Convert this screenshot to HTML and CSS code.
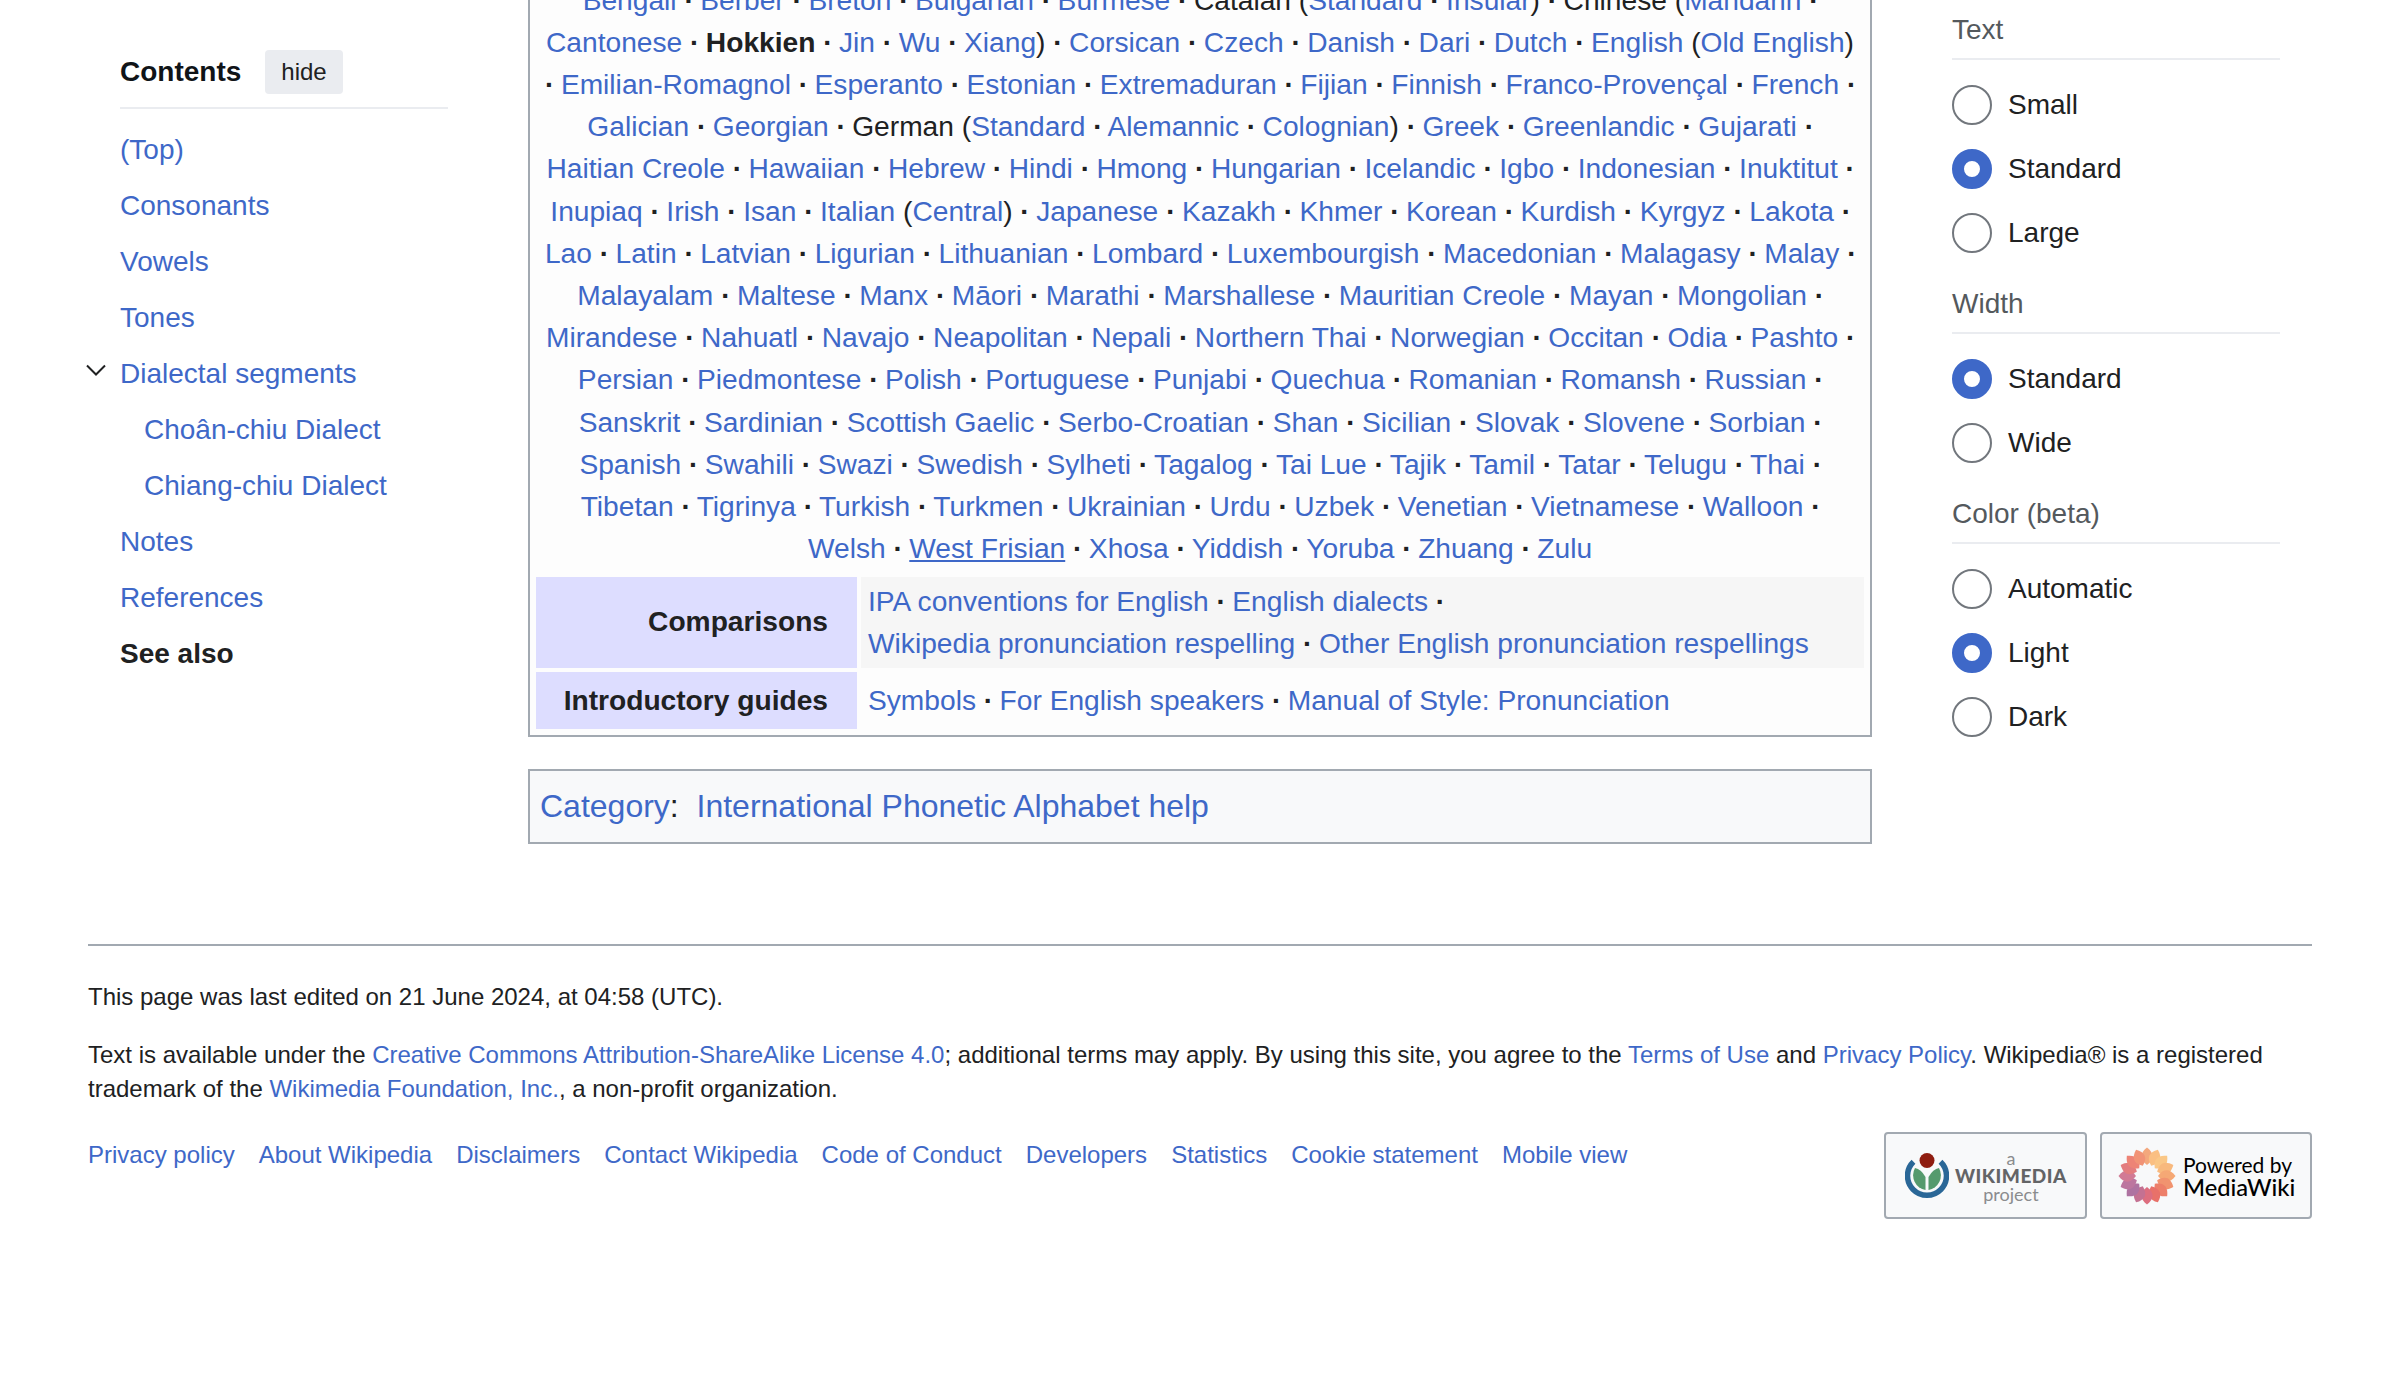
FILE: index.html
```html
<!DOCTYPE html>
<html lang="en">
<head>
<meta charset="utf-8">
<title>Help:IPA/Hokkien</title>
<link rel="stylesheet" href="styles.css">
</head>
<body>
<div class="shell">
	<div class="columns">
		<nav class="toc">
			<div class="toc-head">
				<span class="toc-title">Contents</span>
				<span class="toc-hide">hide</span>
			</div>
			<ul class="toc-list">
				<li><a href="#">(Top)</a></li>
				<li><a href="#">Consonants</a></li>
				<li><a href="#">Vowels</a></li>
				<li><a href="#">Tones</a></li>
				<li class="toc-parent">
					<svg class="toc-chevron" width="20" height="12" viewBox="0 0 20 12"><path d="M1 1.5 L10 10.5 L19 1.5" fill="none" stroke="#202122" stroke-width="2"/></svg>
					<a href="#">Dialectal segments</a>
				</li>
				<li class="toc-sub"><a href="#">Choân-chiu Dialect</a></li>
				<li class="toc-sub"><a href="#">Chiang-chiu Dialect</a></li>
				<li><a href="#">Notes</a></li>
				<li><a href="#">References</a></li>
				<li class="toc-current">See also</li>
			</ul>
		</nav>

		<main class="content">
			<div class="navbox">
				<div class="nav-langs">
					<a href="#">Bengali</a> <b>·</b> <a href="#">Berber</a> <b>·</b> <a href="#">Breton</a> <b>·</b> <a href="#">Bulgarian</a> <b>·</b> <a href="#">Burmese</a> <b>·</b> Catalan (<a href="#">Standard</a> <b>·</b> <a href="#">Insular</a>) <b>·</b> Chinese (<a href="#">Mandarin</a> <b>·</b><br>
					<a href="#">Cantonese</a> <b>·</b> <strong>Hokkien</strong> <b>·</b> <a href="#">Jin</a> <b>·</b> <a href="#">Wu</a> <b>·</b> <a href="#">Xiang</a>) <b>·</b> <a href="#">Corsican</a> <b>·</b> <a href="#">Czech</a> <b>·</b> <a href="#">Danish</a> <b>·</b> <a href="#">Dari</a> <b>·</b> <a href="#">Dutch</a> <b>·</b> <a href="#">English</a> (<a href="#">Old English</a>)<br>
					<b>·</b> <a href="#">Emilian-Romagnol</a> <b>·</b> <a href="#">Esperanto</a> <b>·</b> <a href="#">Estonian</a> <b>·</b> <a href="#">Extremaduran</a> <b>·</b> <a href="#">Fijian</a> <b>·</b> <a href="#">Finnish</a> <b>·</b> <a href="#">Franco-Provençal</a> <b>·</b> <a href="#">French</a> <b>·</b><br>
					<a href="#">Galician</a> <b>·</b> <a href="#">Georgian</a> <b>·</b> German (<a href="#">Standard</a> <b>·</b> <a href="#">Alemannic</a> <b>·</b> <a href="#">Colognian</a>) <b>·</b> <a href="#">Greek</a> <b>·</b> <a href="#">Greenlandic</a> <b>·</b> <a href="#">Gujarati</a> <b>·</b><br>
					<a href="#">Haitian Creole</a> <b>·</b> <a href="#">Hawaiian</a> <b>·</b> <a href="#">Hebrew</a> <b>·</b> <a href="#">Hindi</a> <b>·</b> <a href="#">Hmong</a> <b>·</b> <a href="#">Hungarian</a> <b>·</b> <a href="#">Icelandic</a> <b>·</b> <a href="#">Igbo</a> <b>·</b> <a href="#">Indonesian</a> <b>·</b> <a href="#">Inuktitut</a> <b>·</b><br>
					<a href="#">Inupiaq</a> <b>·</b> <a href="#">Irish</a> <b>·</b> <a href="#">Isan</a> <b>·</b> <a href="#">Italian</a> (<a href="#">Central</a>) <b>·</b> <a href="#">Japanese</a> <b>·</b> <a href="#">Kazakh</a> <b>·</b> <a href="#">Khmer</a> <b>·</b> <a href="#">Korean</a> <b>·</b> <a href="#">Kurdish</a> <b>·</b> <a href="#">Kyrgyz</a> <b>·</b> <a href="#">Lakota</a> <b>·</b><br>
					<a href="#">Lao</a> <b>·</b> <a href="#">Latin</a> <b>·</b> <a href="#">Latvian</a> <b>·</b> <a href="#">Ligurian</a> <b>·</b> <a href="#">Lithuanian</a> <b>·</b> <a href="#">Lombard</a> <b>·</b> <a href="#">Luxembourgish</a> <b>·</b> <a href="#">Macedonian</a> <b>·</b> <a href="#">Malagasy</a> <b>·</b> <a href="#">Malay</a> <b>·</b><br>
					<a href="#">Malayalam</a> <b>·</b> <a href="#">Maltese</a> <b>·</b> <a href="#">Manx</a> <b>·</b> <a href="#">Māori</a> <b>·</b> <a href="#">Marathi</a> <b>·</b> <a href="#">Marshallese</a> <b>·</b> <a href="#">Mauritian Creole</a> <b>·</b> <a href="#">Mayan</a> <b>·</b> <a href="#">Mongolian</a> <b>·</b><br>
					<a href="#">Mirandese</a> <b>·</b> <a href="#">Nahuatl</a> <b>·</b> <a href="#">Navajo</a> <b>·</b> <a href="#">Neapolitan</a> <b>·</b> <a href="#">Nepali</a> <b>·</b> <a href="#">Northern Thai</a> <b>·</b> <a href="#">Norwegian</a> <b>·</b> <a href="#">Occitan</a> <b>·</b> <a href="#">Odia</a> <b>·</b> <a href="#">Pashto</a> <b>·</b><br>
					<a href="#">Persian</a> <b>·</b> <a href="#">Piedmontese</a> <b>·</b> <a href="#">Polish</a> <b>·</b> <a href="#">Portuguese</a> <b>·</b> <a href="#">Punjabi</a> <b>·</b> <a href="#">Quechua</a> <b>·</b> <a href="#">Romanian</a> <b>·</b> <a href="#">Romansh</a> <b>·</b> <a href="#">Russian</a> <b>·</b><br>
					<a href="#">Sanskrit</a> <b>·</b> <a href="#">Sardinian</a> <b>·</b> <a href="#">Scottish Gaelic</a> <b>·</b> <a href="#">Serbo-Croatian</a> <b>·</b> <a href="#">Shan</a> <b>·</b> <a href="#">Sicilian</a> <b>·</b> <a href="#">Slovak</a> <b>·</b> <a href="#">Slovene</a> <b>·</b> <a href="#">Sorbian</a> <b>·</b><br>
					<a href="#">Spanish</a> <b>·</b> <a href="#">Swahili</a> <b>·</b> <a href="#">Swazi</a> <b>·</b> <a href="#">Swedish</a> <b>·</b> <a href="#">Sylheti</a> <b>·</b> <a href="#">Tagalog</a> <b>·</b> <a href="#">Tai Lue</a> <b>·</b> <a href="#">Tajik</a> <b>·</b> <a href="#">Tamil</a> <b>·</b> <a href="#">Tatar</a> <b>·</b> <a href="#">Telugu</a> <b>·</b> <a href="#">Thai</a> <b>·</b><br>
					<a href="#">Tibetan</a> <b>·</b> <a href="#">Tigrinya</a> <b>·</b> <a href="#">Turkish</a> <b>·</b> <a href="#">Turkmen</a> <b>·</b> <a href="#">Ukrainian</a> <b>·</b> <a href="#">Urdu</a> <b>·</b> <a href="#">Uzbek</a> <b>·</b> <a href="#">Venetian</a> <b>·</b> <a href="#">Vietnamese</a> <b>·</b> <a href="#">Walloon</a> <b>·</b><br>
					<a href="#">Welsh</a> <b>·</b> <a href="#" class="hover">West Frisian</a> <b>·</b> <a href="#">Xhosa</a> <b>·</b> <a href="#">Yiddish</a> <b>·</b> <a href="#">Yoruba</a> <b>·</b> <a href="#">Zhuang</a> <b>·</b> <a href="#">Zulu</a>
				</div>
				<div class="nav-groups">
					<div class="nav-group">Comparisons</div>
					<div class="nav-list even">
						<a href="#">IPA conventions for English</a> <b>·</b> <a href="#">English dialects</a> <b>·</b><br>
						<a href="#">Wikipedia pronunciation respelling</a> <b>·</b> <a href="#">Other English pronunciation respellings</a>
					</div>
					<div class="nav-group">Introductory guides</div>
					<div class="nav-list">
						<a href="#">Symbols</a> <b>·</b> <a href="#">For English speakers</a> <b>·</b> <a href="#">Manual of Style: Pronunciation</a>
					</div>
				</div>
			</div>
			<div class="catlinks"><a href="#">Category</a>:&nbsp; <a href="#">International Phonetic Alphabet help</a></div>
		</main>

		<aside class="appearance">
			<section class="app-group">
				<h3>Text</h3>
				<label class="radio"><span class="dot"></span>Small</label>
				<label class="radio"><span class="dot on"></span>Standard</label>
				<label class="radio"><span class="dot"></span>Large</label>
			</section>
			<section class="app-group">
				<h3>Width</h3>
				<label class="radio"><span class="dot on"></span>Standard</label>
				<label class="radio"><span class="dot"></span>Wide</label>
			</section>
			<section class="app-group">
				<h3>Color (beta)</h3>
				<label class="radio"><span class="dot"></span>Automatic</label>
				<label class="radio"><span class="dot on"></span>Light</label>
				<label class="radio"><span class="dot"></span>Dark</label>
			</section>
		</aside>
	</div>

	<footer class="footer">
		<p class="foot-line">This page was last edited on 21 June 2024, at 04:58 (UTC).</p>
		<p class="foot-line">Text is available under the <a href="#">Creative Commons Attribution-ShareAlike License 4.0</a>; additional terms may apply. By using this site, you agree to the <a href="#">Terms of Use</a> and <a href="#">Privacy Policy</a>. Wikipedia® is a registered trademark of the <a href="#">Wikimedia Foundation, Inc.</a>, a non-profit organization.</p>
		<div class="foot-bottom">
			<ul class="foot-links">
				<li><a href="#">Privacy policy</a></li>
				<li><a href="#">About Wikipedia</a></li>
				<li><a href="#">Disclaimers</a></li>
				<li><a href="#">Contact Wikipedia</a></li>
				<li><a href="#">Code of Conduct</a></li>
				<li><a href="#">Developers</a></li>
				<li><a href="#">Statistics</a></li>
				<li><a href="#">Cookie statement</a></li>
				<li><a href="#">Mobile view</a></li>
			</ul>
			<div class="badges">
				<a class="badge badge-wm" href="#">
					<svg width="44" height="46" viewBox="0 0 44 46">
						<path d="M8.5 8.7 A19.5 19.5 0 1 0 35.5 8.7" fill="none" stroke="#2a6797" stroke-width="5.5"/>
						<path d="M20.5 37 A15 15 0 0 1 10 15 Q16 16 20.5 24 Z" fill="#559a6d"/>
						<path d="M23.5 37 A15 15 0 0 0 34 15 Q28 16 23.5 24 Z" fill="#559a6d"/>
						<circle cx="22" cy="7.5" r="7.5" fill="#8f1d10"/>
					</svg>
					<span class="wm-text">
						<span class="wm-a">a</span>
						<span class="wm-name">WIKIMEDIA</span>
						<span class="wm-project">project</span>
					</span>
				</a>
				<a class="badge badge-mw" href="#">
					<svg width="58" height="58" viewBox="-29 -29 58 58">
						<defs><path id="petal" d="M0 -28.5 C7 -23 8 -17 0 -11 C-8 -17 -7 -23 0 -28.5 Z"/></defs>
						<g opacity="0.85">
							<use href="#petal" fill="#f39a68"/>
							<use href="#petal" transform="rotate(22.5)" fill="#fbb56e"/>
							<use href="#petal" transform="rotate(45)" fill="#fbbf72"/>
							<use href="#petal" transform="rotate(67.5)" fill="#f9ae68"/>
							<use href="#petal" transform="rotate(90)" fill="#f59a5e"/>
							<use href="#petal" transform="rotate(112.5)" fill="#f08257"/>
							<use href="#petal" transform="rotate(135)" fill="#ec6a50"/>
							<use href="#petal" transform="rotate(157.5)" fill="#e65a50"/>
							<use href="#petal" transform="rotate(180)" fill="#d9566a"/>
							<use href="#petal" transform="rotate(202.5)" fill="#bc5a80"/>
							<use href="#petal" transform="rotate(225)" fill="#a25c92"/>
							<use href="#petal" transform="rotate(247.5)" fill="#b26090"/>
							<use href="#petal" transform="rotate(270)" fill="#cb6584"/>
							<use href="#petal" transform="rotate(292.5)" fill="#e0686a"/>
							<use href="#petal" transform="rotate(315)" fill="#ec7060"/>
							<use href="#petal" transform="rotate(337.5)" fill="#f0825f"/>
						</g>
					</svg>
					<span class="mw-text">
						<span class="mw-by">Powered by</span>
						<span class="mw-name">MediaWiki</span>
					</span>
				</a>
			</div>
		</div>
	</footer>
</div>
</body>
</html>
```

FILE: styles.css
```css
html, body {
	margin: 0;
	padding: 0;
}
body {
	font-family: "Liberation Sans", Arial, sans-serif;
	color: #202122;
	background: #fff;
}
a {
	color: #3e68c8;
	text-decoration: none;
}
ul {
	list-style: none;
	margin: 0;
	padding: 0;
}
.shell {
	height: 1398px;
	overflow: hidden;
}
.columns {
	display: grid;
	grid-template-columns: 440px 1344px 408px;
	padding-left: 88px;
}

/* contents */
.toc {
	padding: 50px 80px 0 32px;
	font-size: 28px;
}
.toc-head {
	display: flex;
	align-items: center;
	gap: 24px;
	height: 44px;
	padding-bottom: 13px;
	border-bottom: 2px solid #eaecf0;
}
.toc-title {
	font-weight: bold;
	color: #101418;
}
.toc-hide {
	background: #eaecf0;
	border-radius: 4px;
	font-size: 24px;
	line-height: 44px;
	padding: 0 16px;
}
.toc-list {
	padding-top: 13px;
}
.toc-list li {
	height: 56px;
	line-height: 56px;
	position: relative;
}
.toc-chevron {
	position: absolute;
	left: -34px;
	top: 18px;
}
.toc-sub {
	padding-left: 24px;
}
.toc-current {
	font-weight: bold;
}

/* navbox */
.content {
	display: flex;
	flex-direction: column;
	gap: 32px;
	margin-top: -22.5px;
}
.navbox {
	border: 2px solid #a2a9b1;
	background: #fdfdfd;
	font-size: 28.16px;
	line-height: 42.2px;
	padding: 0 6px 6px;
}
.navbox b {
	font-weight: bold;
	letter-spacing: -1.4px;
}
.navbox strong {
	font-weight: bold;
}
.nav-langs {
	text-align: center;
	padding-bottom: 6.5px;
	white-space: nowrap;
}
.hover {
	text-decoration: underline;
}
.nav-groups {
	display: grid;
	grid-template-columns: 321px 1fr;
	column-gap: 4px;
	row-gap: 4px;
}
.nav-group {
	background: #ddddff;
	font-weight: bold;
	padding-right: 29px;
	display: flex;
	align-items: center;
	justify-content: flex-end;
}
.nav-list {
	padding: 4px 7px 3px;
	white-space: nowrap;
}
.nav-list:last-child {
	padding: 8px 7px 7px;
}
.nav-list.even {
	background: #f6f6f6;
}
.catlinks {
	border: 2px solid #a2a9b1;
	background: #f8f9fa;
	font-size: 32px;
	line-height: 71px;
	padding: 0 10px;
}

/* appearance */
.appearance {
	padding: 8px 0 0 80px;
	font-size: 28px;
}
.app-group {
	padding-bottom: 17px;
}
.app-group h3 {
	margin: 0 0 13px;
	font-size: 28px;
	font-weight: normal;
	color: #54595d;
	line-height: 44px;
	padding-bottom: 6px;
	border-bottom: 2px solid #eaecf0;
}
.radio {
	display: flex;
	align-items: center;
	gap: 16px;
	height: 64px;
}
.dot {
	box-sizing: border-box;
	width: 40px;
	height: 40px;
	border: 2px solid #72777d;
	border-radius: 50%;
	background: #fff;
	flex: none;
}
.dot.on {
	border: 12px solid #3e68c8;
}

/* footer */
.footer {
	margin: 100px 88px 0;
	border-top: 2px solid #a2a9b1;
	font-size: 24px;
	line-height: 33.6px;
	padding-top: 34px;
}
.foot-line {
	margin: 0 0 24px;
}
.foot-bottom {
	display: flex;
	justify-content: space-between;
	align-items: flex-start;
	padding-top: 3px;
}
.foot-links {
	display: flex;
	gap: 24px;
	padding-top: 6px;
}
.badges {
	display: flex;
	gap: 13px;
}
.badge {
	box-sizing: border-box;
	height: 87px;
	border: 2px solid #a2a9b1;
	border-radius: 4px;
	background: #f8f9fa;
	display: flex;
	align-items: center;
}
.badge-wm {
	width: 203px;
	padding-left: 19px;
	gap: 6px;
}
.badge-mw {
	width: 212px;
	padding-left: 16px;
	gap: 7px;
}
.wm-text {
	display: flex;
	flex-direction: column;
	align-items: center;
	font-family: Lato, sans-serif;
	line-height: 18px;
}
.wm-a {
	font-size: 18px;
	color: #8a8c8e;
}
.wm-name {
	font-size: 19px;
	font-weight: 900;
	letter-spacing: 0.5px;
	color: #636466;
}
.wm-project {
	font-size: 18px;
	color: #8a8c8e;
}
.mw-text {
	display: flex;
	flex-direction: column;
	font-family: Lato, sans-serif;
	color: #000;
	line-height: 22px;
}
.mw-by {
	font-size: 21px;
}
.mw-name {
	font-size: 23.7px;
	font-weight: 500;
}
```
